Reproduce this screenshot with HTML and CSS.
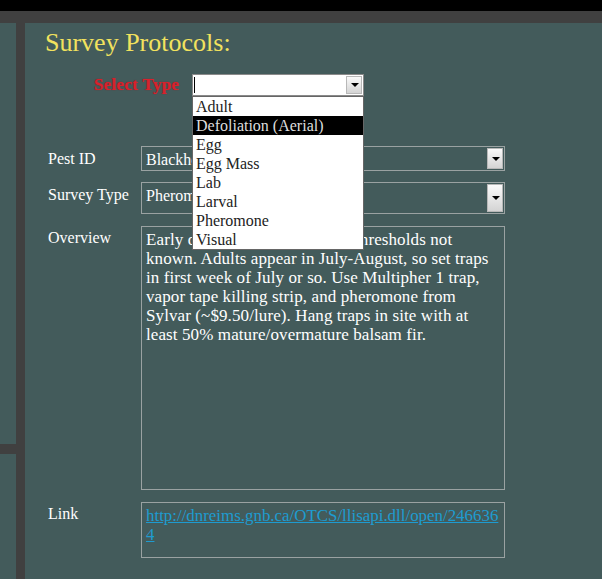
FILE: index.html
```html
<!DOCTYPE html>
<html>
<head>
    <meta charset="UTF-8">
    <title>Survey Protocols</title>
    <link rel="stylesheet" href="styles.css">
</head>
<body>
    <div class="top-black"></div>
    <div class="top-gray"></div>
    <div class="page">
        <div class="side">
            <div class="side-top"></div>
            <div class="side-bar"></div>
            <div class="side-bottom"></div>
        </div>
        <div class="divider"></div>
        <div class="main">
            <h1 class="title">Survey Protocols:</h1>
            <div class="type-row">
                <span class="type-label">Select Type</span>
                <div class="type-select">
                    <span class="caret"></span>
                    <span class="arrow"></span>
                    <ul class="type-list">
                        <li>Adult</li>
                        <li class="active">Defoliation (Aerial)</li>
                        <li>Egg</li>
                        <li>Egg Mass</li>
                        <li>Lab</li>
                        <li>Larval</li>
                        <li>Pheromone</li>
                        <li>Visual</li>
                    </ul>
                </div>
            </div>
            <div class="form">
                <div class="row">
                    <span class="label">Pest ID</span>
                    <div class="field field-pest">Blackheaded Budworm<span class="arrow"></span></div>
                </div>
                <div class="row">
                    <span class="label">Survey Type</span>
                    <div class="field field-survey">Pheromone<span class="arrow"></span></div>
                </div>
                <div class="row">
                    <span class="label">Overview</span>
                    <div class="field field-overview">Early detection of outbreaks. Thresholds not<br>known. Adults appear in July-August, so set traps<br>in first week of July or so. Use Multipher 1 trap,<br>vapor tape killing strip, and pheromone from<br>Sylvar (~$9.50/lure). Hang traps in site with at<br>least 50% mature/overmature balsam fir.</div>
                </div>
                <div class="row">
                    <span class="label">Link</span>
                    <div class="field field-link"><a href="#">http://dnreims.gnb.ca/OTCS/llisapi.dll/open/246636<br>4</a></div>
                </div>
            </div>
        </div>
    </div>
</body>
</html>
```

FILE: styles.css
```css
html, body {
  height: 100%;
}
* {
  margin: 0px;
  padding: 0px;
  box-sizing: border-box;
}
ul, li {
  list-style: none;
}
body {
  background: #435b5b;
  font-family: "Liberation Serif", "DejaVu Serif", serif;
  font-size: 16px;
  color: #fff;
  overflow: hidden;
}
.top-black {
  height: 11px;
  background: #000;
}
.top-gray {
  height: 12px;
  background: #404040;
}
.page {
  display: flex;
  height: 556px;
}
.side {
  width: 16px;
  display: flex;
  flex-direction: column;
}
.side-top {
  height: 421px;
  background: #435b5b;
}
.side-bar {
  height: 10px;
  background: #404040;
}
.side-bottom {
  flex: 1;
  background: #435b5b;
}
.divider {
  width: 9px;
  background: #404040;
}
.main {
  flex: 1;
  position: relative;
  padding: 4px 0px 0px 20px;
}
.title {
  font-size: 26px;
  font-weight: normal;
  color: #f2e25e;
  line-height: 32px;
  height: 47px;
}
.type-row {
  display: flex;
  align-items: center;
  padding-left: 49px;
  height: 22px;
}
.type-label {
  width: 98px;
  color: #d8222e;
  font-weight: bold;
  font-size: 17px;
  letter-spacing: 0.3px;
  text-shadow: 0px 0px 1px #a01018;
}
.type-select {
  position: relative;
  width: 172px;
  height: 22px;
  background: #fff;
  border: 1px solid #8a8a8a;
}
.caret {
  position: absolute;
  left: 1px;
  top: 2px;
  width: 1px;
  height: 16px;
  background: #000;
}
.type-select .arrow {
  top: 1px;
  right: 1px;
  height: 18px;
}
.type-list {
  position: absolute;
  left: -1px;
  top: 21px;
  width: 172px;
  background: #fff;
  border: 1px solid #666;
  z-index: 10;
}
.type-list li {
  height: 19px;
  line-height: 19px;
  padding-left: 3px;
  color: #222;
  font-size: 16px;
}
.type-list li.active {
  background: #000;
  color: #ddd;
}
.form {
  margin-top: 50px;
  display: flex;
  flex-direction: column;
  gap: 11px;
}
.row {
  display: flex;
  align-items: flex-start;
}
.label {
  width: 96px;
  padding-left: 3px;
  padding-top: 3px;
  line-height: 19px;
}
.field {
  position: relative;
  width: 364px;
  border: 1px solid #9aa2a2;
  padding: 3px 4px;
  line-height: 19px;
  white-space: nowrap;
  overflow: hidden;
}
.field-pest {
  height: 25px;
}
.field-survey {
  height: 32px;
}
.field-overview {
  height: 264px;
  margin-top: 1px;
  font-size: 17px;
  letter-spacing: 0.1px;
}
.field-link {
  height: 56px;
  margin-top: 1px;
  font-size: 16.9px;
}
.field-link a {
  color: #1e9bd0;
}
.arrow {
  position: absolute;
  right: 1px;
  top: 1px;
  bottom: 1px;
  width: 16px;
  background: linear-gradient(#fafafa, #d4d4d4);
  border: 1px solid #b8b8b8;
}
.arrow::after {
  content: "";
  position: absolute;
  left: 4px;
  top: 50%;
  margin-top: -2px;
  border-left: 4px solid transparent;
  border-right: 4px solid transparent;
  border-top: 4px solid #000;
}
```
